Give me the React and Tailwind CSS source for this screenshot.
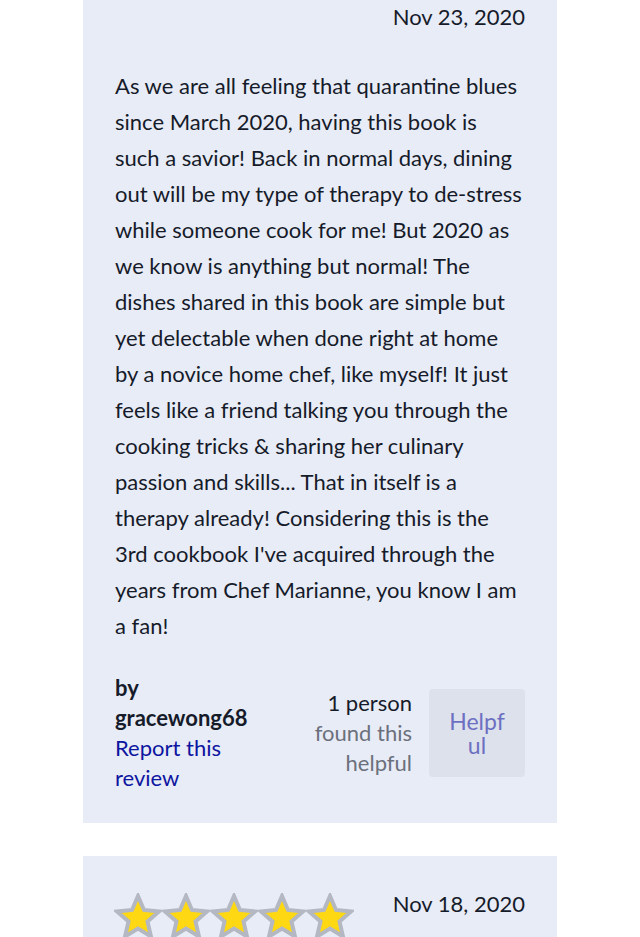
import React from "react";

const Star = () => (
  <svg width="48" height="46" viewBox="0 0 48 46" className="shrink-0">
    <polygon
      points="24,3 30,17 45,18.5 33.5,28.5 37,43.5 24,35.5 11,43.5 14.5,28.5 3,18.5 18,17"
      fill="#ffd814"
      stroke="#b3b8c2"
      strokeWidth="4"
      strokeLinejoin="miter"
    />
  </svg>
);

export default function App() {
  const text =
    "As we are all feeling that quarantine blues since March 2020, having this book is such a savior! Back in normal days, dining out will be my type of therapy to de-stress while someone cook for me! But 2020 as we know is anything but normal! The dishes shared in this book are simple but yet delectable when done right at home by a novice home chef, like myself! It just feels like a friend talking you through the cooking tricks & sharing her culinary passion and skills... That in itself is a therapy already! Considering this is the 3rd cookbook I've acquired through the years from Chef Marianne, you know I am a fan!";
  return (
    <div className="min-h-[937px] bg-white text-[#161b2a]" style={{ fontFamily: "Lato, 'Noto Sans', sans-serif" }}>
      <div className="mx-[83px] bg-[#e8ecf6] px-8 pt-[2px] pb-[30px]">
        <div className="flex justify-end text-[22px] leading-[30px]">Nov 23, 2020</div>
        <p className="mt-[36px] text-[22px] leading-[36px]">{text}</p>
        <div className="mt-[29px] flex items-center">
          <div className="w-[145px] shrink-0 text-[22px] leading-[30px]">
            <div className="font-bold">by gracewong68</div>
            <a className="text-[#0e15a0]">Report this review</a>
          </div>
          <div className="flex flex-1 items-center justify-end gap-[17px]">
            <div className="text-right text-[22px] leading-[30px]">
              <div>1 person</div>
              <div className="text-[#6b707c]">found this helpful</div>
            </div>
            <button className="h-[88px] w-[96px] shrink-0 rounded-[4px] bg-[#dde1ec] px-[20px] text-[23px] leading-[24px] text-[#6d70c2] break-all">
              Helpful
            </button>
          </div>
        </div>
      </div>
      <div className="mx-[83px] mt-[33px] bg-[#e8ecf6] px-8 pt-[33px] pb-8">
        <div className="flex items-start justify-between">
          <div className="-ml-[1px] mt-[4px] flex">
            <Star />
            <Star />
            <Star />
            <Star />
            <Star />
          </div>
          <div className="text-[22px] leading-[30px]">Nov 18, 2020</div>
        </div>
      </div>
    </div>
  );
}
